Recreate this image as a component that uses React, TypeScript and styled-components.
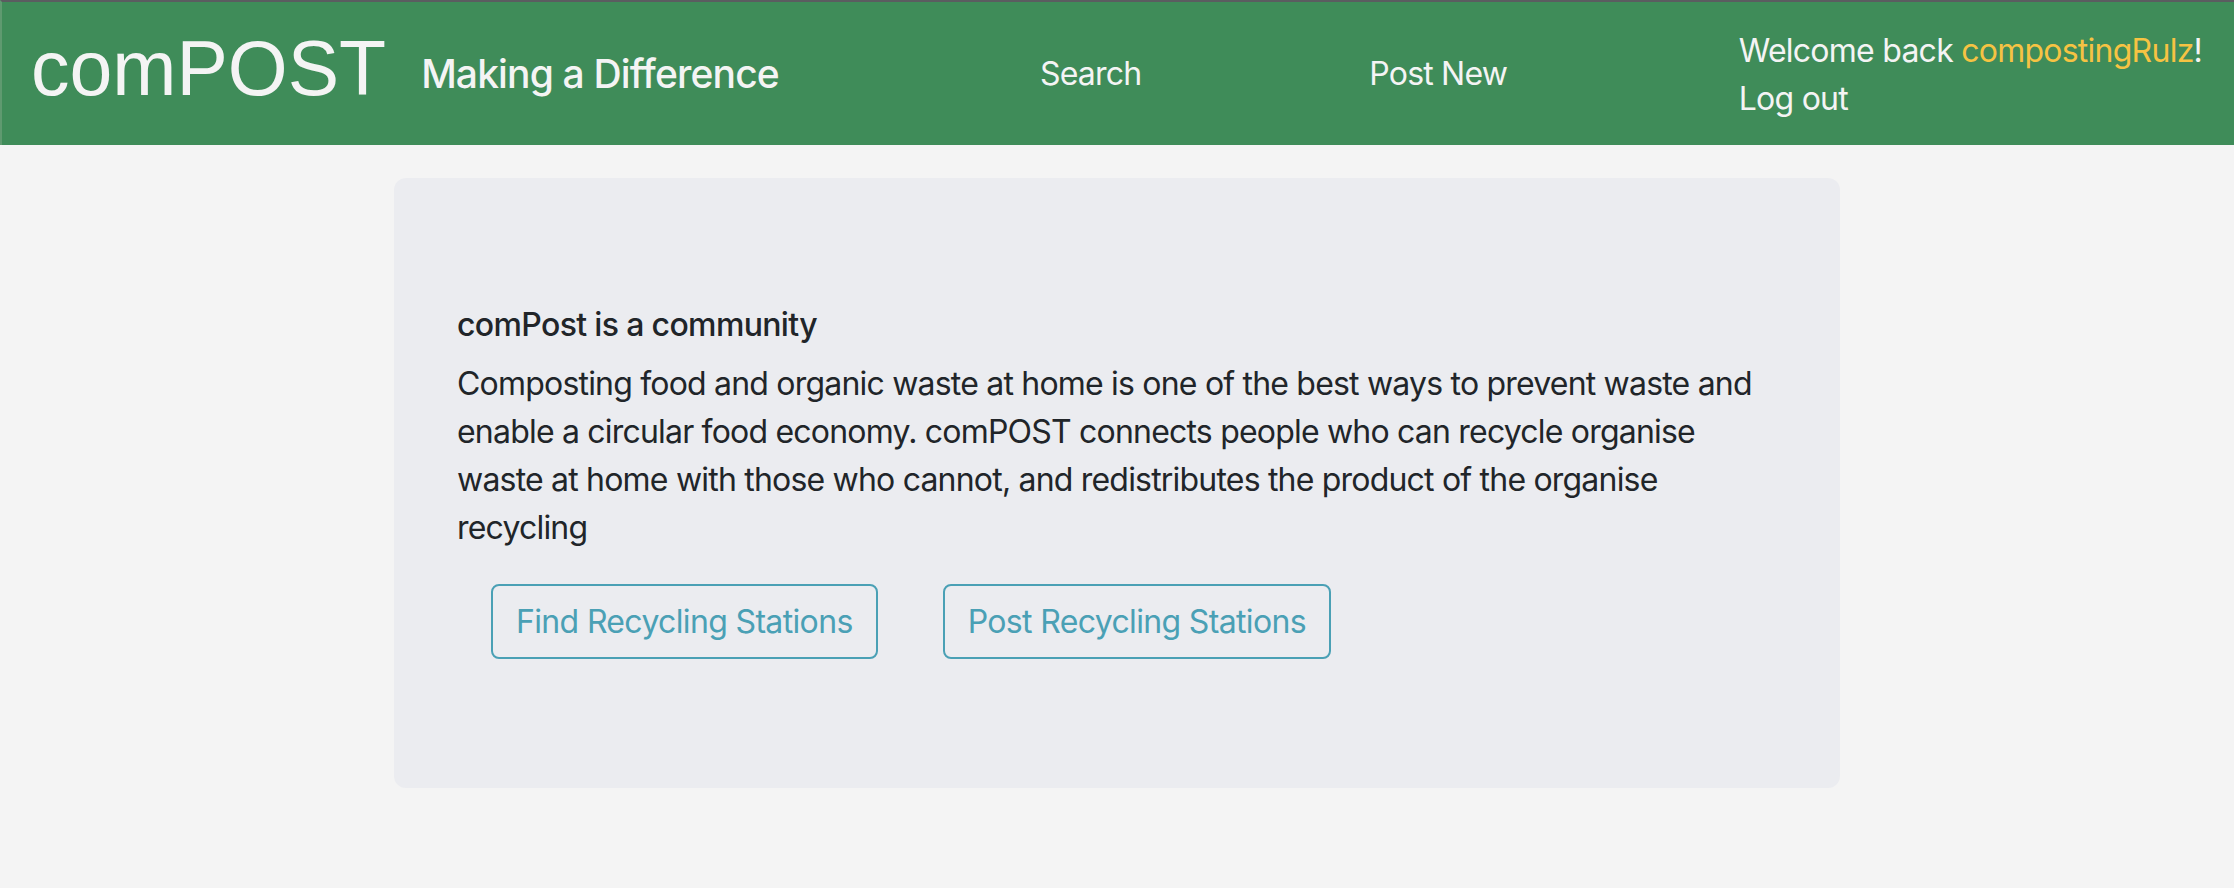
import React from "react";
import styled, { createGlobalStyle } from "styled-components";

const GlobalStyle = createGlobalStyle`
  html, body {
    margin: 0;
    padding: 0;
    background-color: #f4f4f4;
    font-family: Inter, "Noto Sans", "Liberation Sans", sans-serif;
    color: #212529;
  }
  * {
    box-sizing: border-box;
  }
`;

const Page = styled.div`
  min-height: 888px;
  background-color: #f4f4f4;
`;

const Navbar = styled.header`
  height: 145px;
  background-color: #3f8c59;
  border-top: 2px solid #5b5c60;
  border-left: 2px solid #5f9a70;
  display: flex;
  align-items: center;
  padding: 0 32px 0 29px;
  color: #f4f4f4;
`;

const Brand = styled.a`
  font-family: "Liberation Sans", Arial, sans-serif;
  font-size: 77px;
  line-height: 1;
  color: #f4f4f4;
  text-decoration: none;
  margin-top: -10px;
`;

const Tagline = styled.span`
  font-size: 39px;
  font-weight: 500;
  margin-left: 35px;
  letter-spacing: -0.85px;
`;

const NavLinks = styled.nav`
  display: flex;
  align-items: center;
  margin-left: 261px;
  gap: 228px;
`;

const NavLink = styled.a`
  font-size: 32px;
  color: #f4f4f4;
  text-decoration: none;
  letter-spacing: -0.8px;
`;

const UserBox = styled.div`
  margin-left: auto;
  display: flex;
  flex-direction: column;
  font-size: 32px;
  line-height: 48px;
  letter-spacing: -0.75px;
  margin-top: 2px;
`;

const UserName = styled.span`
  color: #f6c343;
`;

const Main = styled.main`
  display: flex;
  justify-content: center;
  padding-top: 33px;
`;

const Jumbo = styled.section`
  width: 1446px;
  background-color: #ebecf0;
  border-radius: 12px;
  padding: 128px 63px 129px;
`;

const Heading = styled.h2`
  margin: 0 0 16px;
  font-size: 32px;
  line-height: 1.2;
  font-weight: 500;
  letter-spacing: -0.65px;
  color: #212529;
`;

const Lead = styled.p`
  margin: 0 0 32px;
  font-size: 32px;
  line-height: 48px;
  letter-spacing: -0.8px;
  color: #212529;
  max-width: 1312px;
`;

const ButtonRow = styled.div`
  display: flex;
  gap: 65px;
  padding-left: 34px;
`;

const OutlineButton = styled.button`
  height: 75px;
  padding: 0 23px;
  border: 2px solid #4aa0b5;
  border-radius: 8px;
  background: transparent;
  color: #4aa0b5;
  font-family: Inter, "Noto Sans", "Liberation Sans", sans-serif;
  font-size: 32px;
  letter-spacing: -0.65px;
  cursor: pointer;
`;

export default function App() {
  return (
    <Page>
      <GlobalStyle />
      <Navbar>
        <Brand href="#">comPOST</Brand>
        <Tagline>Making a Difference</Tagline>
        <NavLinks>
          <NavLink href="#">Search</NavLink>
          <NavLink href="#">Post New</NavLink>
        </NavLinks>
        <UserBox>
          <span>
            Welcome back <UserName>compostingRulz</UserName>!
          </span>
          <span>Log out</span>
        </UserBox>
      </Navbar>
      <Main>
        <Jumbo>
          <Heading>comPost is a community</Heading>
          <Lead>
            Composting food and organic waste at home is one of the best ways to
            prevent waste and enable a circular food economy. comPOST connects
            people who can recycle organise waste at home with those who cannot,
            and redistributes the product of the organise recycling
          </Lead>
          <ButtonRow>
            <OutlineButton>Find Recycling Stations</OutlineButton>
            <OutlineButton>Post Recycling Stations</OutlineButton>
          </ButtonRow>
        </Jumbo>
      </Main>
    </Page>
  );
}
